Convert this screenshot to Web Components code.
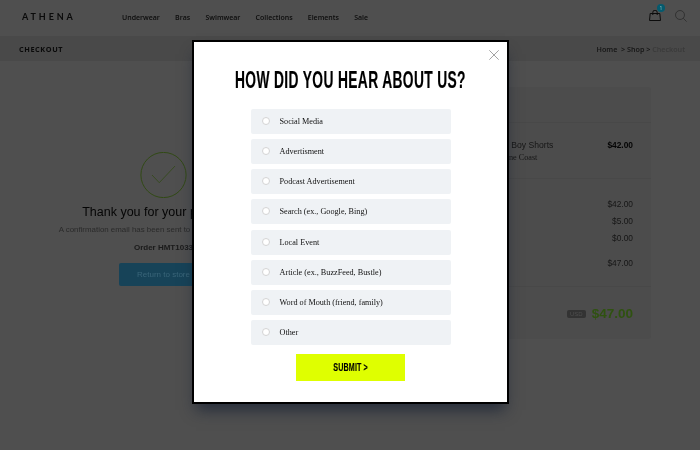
<!DOCTYPE html>
<html>
<head>
<meta charset="utf-8">
<title>Checkout</title>
<style>
    html, body { margin: 0; height: 450px; overflow: hidden; background: #4f4f4f; }
    body { font-family: "Liberation Sans", sans-serif; }
</style>
</head>
<body>
<checkout-page>
    <site-header></site-header>
    <crumb-bar></crumb-bar>
    <div slot="left"><order-confirm></order-confirm></div>
    <div slot="right"><order-summary></order-summary></div>
</checkout-page>
<survey-modal>
    <survey-option>Social Media</survey-option>
    <survey-option>Advertisment</survey-option>
    <survey-option>Podcast Advertisement</survey-option>
    <survey-option>Search (ex., Google, Bing)</survey-option>
    <survey-option>Local Event</survey-option>
    <survey-option>Article (ex., BuzzFeed, Bustle)</survey-option>
    <survey-option>Word of Mouth (friend, family)</survey-option>
    <survey-option>Other</survey-option>
</survey-modal>
<script>
class checkoutPage extends HTMLElement {
    constructor() {
        super();
        this.attachShadow({ mode : 'open' });
        this.shadowRoot.innerHTML = `
            <style>
                :host { display: block; height: 450px; filter: blur(.5px); }
                .content {
                    display: grid;
                    grid-template-columns: 327px 1fr;
                    padding: 26px 49px 0 0;
                }
            </style>
            <slot></slot>
            <section class="content">
                <slot name="left"></slot>
                <slot name="right"></slot>
            </section>
        `;
    }
}

class siteHeader extends HTMLElement {
    constructor() {
        super();
        this.attachShadow({ mode : 'open' });
        this.shadowRoot.innerHTML = `
            <style>
                :host {
                    display: flex;
                    align-items: center;
                    height: 36px;
                    padding: 0 13px 0 22px;
                    font-family: "Open Sans", sans-serif;
                    color: #0c0c0c;
                }
                .logo {
                    width: 100px;
                    font-size: 9px;
                    letter-spacing: 2.9px;
                    color: #0a0a0a;
                    font-family: "Lato", sans-serif;
                    font-weight: 700;
                    margin-bottom: 3px;
                }
                nav { display: flex; gap: 15.2px; font-size: 7px; font-weight: 600; flex: 1; margin-bottom: 1px; }
                .icons { display: flex; align-items: center; gap: 14px; margin-bottom: 5px; }
                .cart { position: relative; width: 12px; height: 11px; }
                .badge {
                    position: absolute;
                    top: -6px;
                    left: 8px;
                    width: 8px;
                    height: 8px;
                    border-radius: 50%;
                    background: #055a6e;
                    color: #9cc;
                    font-size: 5px;
                    line-height: 8px;
                    text-align: center;
                }
                svg { display: block; }
            </style>
            <div class="logo">ATHENA</div>
            <nav>
                <span>Underwear</span><span>Bras</span><span>Swimwear</span>
                <span>Collections</span><span>Elements</span><span>Sale</span>
            </nav>
            <div class="icons">
                <div class="cart">
                    <svg width="12" height="11" viewBox="0 0 12 11" fill="none" stroke="#0c0c0c" stroke-width="1">
                        <path d="M1.2 3.5h9.6l.7 7H.5z"/>
                        <path d="M3.8 5V2.4a2.2 2.2 0 0 1 4.4 0V5"/>
                    </svg>
                    <span class="badge">1</span>
                </div>
                <svg width="12" height="12" viewBox="0 0 12 12" fill="none" stroke="#2c2c2c" stroke-width=".8">
                    <circle cx="5" cy="5" r="4.5"/><path d="M8.2 8.2 11.6 11.6"/>
                </svg>
            </div>
        `;
    }
}

class crumbBar extends HTMLElement {
    constructor() {
        super();
        this.attachShadow({ mode : 'open' });
        this.shadowRoot.innerHTML = `
            <style>
                :host {
                    display: flex;
                    justify-content: space-between;
                    align-items: center;
                    height: 25px;
                    padding: 0 15px 0 19px;
                    background: #494949;
                    font-family: "Open Sans", sans-serif;
                    color: #0a0a0a;
                }
                h2 { margin: 0; font-size: 7.3px; font-weight: 700; letter-spacing: .6px; }
                .path { font-size: 7.2px; font-weight: 600; color: #141414; }
                .path span { color: #3a3a3a; }
            </style>
            <h2>CHECKOUT</h2>
            <div class="path">Home &nbsp;&gt; Shop &gt; <span>Checkout</span></div>
        `;
    }
}

class orderConfirm extends HTMLElement {
    constructor() {
        super();
        this.attachShadow({ mode : 'open' });
        this.shadowRoot.innerHTML = `
            <style>
                :host {
                    display: flex;
                    flex-direction: column;
                    align-items: center;
                    padding-top: 65px;
                    color: #222;
                }
                svg { display: block; }
                h1 { margin: 5.5px 0 0; font-size: 12.5px; line-height: 17px; font-weight: 400; white-space: nowrap; color: #050505; }
                p { margin: 3px 0 0; font-size: 7.9px; line-height: 11px; color: #2a2a2a; white-space: nowrap; }
                p.order { margin-top: 7px; font-size: 8px; font-weight: 700; color: #1a1a1a; }
                a {
                    display: block;
                    margin-top: 10.5px;
                    width: 89px;
                    height: 23px;
                    background: #174358;
                    border-radius: 2px;
                    color: #3a6579;
                    font-size: 8px;
                    line-height: 23px;
                    text-align: center;
                }
            </style>
            <svg width="47" height="46" viewBox="0 0 47 46" fill="none" stroke="#324a16">
                <circle cx="23.5" cy="23" r="22.6" stroke-width="1"/>
                <path d="M12 23 19.3 30.7 35 14" stroke-width=".8"/>
            </svg>
            <h1>Thank you for your purchase!</h1>
            <p>A confirmation email has been sent to your email inbox now.</p>
            <p class="order">Order HMT1033</p>
            <a>Return to store</a>
        `;
    }
}

class orderSummary extends HTMLElement {
    constructor() {
        super();
        this.attachShadow({ mode : 'open' });
        this.shadowRoot.innerHTML = `
            <style>
                :host {
                    display: block;
                    height: 252px;
                    background: #4c4c4c;
                    border-radius: 3px;
                    font-size: 8.4px;
                    color: #161616;
                }
                section { box-sizing: border-box; border-bottom: 1px solid #484848; }
                .head { height: 36px; }
                .item { height: 56px; display: flex; justify-content: flex-end; padding: 17px 18px 0 0; }
                .name { margin-right: 54px; text-align: right; white-space: nowrap; font-size: 8.6px; }
                .name small { display: block; margin-top: 3px; padding-right: 16px; font: 8.2px "Liberation Serif", serif; }
                .price { font-weight: 700; color: #050505; }
                .totals {
                    height: 108px;
                    display: flex;
                    flex-direction: column;
                    align-items: flex-end;
                    gap: 7px;
                    padding: 20px 18px 0 0;
                }
                .totals div { line-height: 10px; }
                .totals .sum { margin-top: 8px; }
                .grand { border: 0; display: flex; justify-content: flex-end; align-items: center; gap: 6px; padding: 19px 18px 0 0; }
                .usd { background: #333; color: #4f4f4f; font-size: 6px; line-height: 8px; padding: 0 3px; border-radius: 2px; }
                .amount { font-size: 13.5px; font-weight: 700; color: #2f5210; }
            </style>
            <section class="head"></section>
            <section class="item">
                <div class="name">Lace Knit Boy Shorts<small>Marine Coast</small></div>
                <div class="price">$42.00</div>
            </section>
            <section class="totals">
                <div>$42.00</div><div>$5.00</div><div>$0.00</div><div class="sum">$47.00</div>
            </section>
            <section class="grand"><span class="usd">USD</span><span class="amount">$47.00</span></section>
        `;
    }
}

class surveyOption extends HTMLElement {
    constructor() {
        super();
        this.attachShadow({ mode : 'open' });
        this.shadowRoot.innerHTML = `
            <style>
                :host {
                    display: flex;
                    align-items: center;
                    gap: 10px;
                    height: 25px;
                    padding-left: 11px;
                    background: #eff2f5;
                    border-radius: 2px;
                    font: 8.2px "Liberation Serif", serif;
                    color: #111;
                }
                i {
                    width: 6px;
                    height: 6px;
                    border: 1px solid #d4d4d4;
                    border-radius: 50%;
                    background: #fff;
                    margin-top: -1px;
                }
                span { filter: blur(.2px); }
            </style>
            <i></i><span><slot></slot></span>
        `;
    }
}

class surveyModal extends HTMLElement {
    constructor() {
        super();
        this.attachShadow({ mode : 'open' });
        this.shadowRoot.innerHTML = `
            <style>
                :host { position: absolute; inset: 0; display: block; }
                .box {
                    position: relative;
                    box-sizing: border-box;
                    width: 317px;
                    height: 364px;
                    margin: 40px 0 0 192px;
                    padding-top: 23px;
                    background: #fff;
                    border: 2px solid #000;
                    box-shadow: 0 10px 14px -4px rgba(20, 30, 50, .7);
                    display: flex;
                    flex-direction: column;
                    align-items: center;
                }
                .close { position: absolute; top: 8px; right: 8.5px; display: block; }
                /* no condensed face is installed, so squeeze the bold sans */
                .squeeze { display: inline-block; transform: scaleX(.6); letter-spacing: .6px; -webkit-text-stroke: .2px #000; }
                h1 {
                    margin: 0;
                    font: 700 23px/30px "Liberation Sans", sans-serif;
                    color: #000;
                    white-space: nowrap;
                }
                .options { display: grid; gap: 5.15px; width: 200px; margin-top: 14px; }
                button {
                    width: 109px;
                    height: 27px;
                    margin-top: 8.95px;
                    border: 0;
                    padding: 0;
                    background: #dfff00;
                    color: #000;
                    font: 700 11px "Liberation Sans", sans-serif;
                }
                button .squeeze { transform: scaleX(.65); letter-spacing: .2px; -webkit-text-stroke: .15px #000; }
            </style>
            <div class="box">
                <svg class="close" width="10" height="10" viewBox="0 0 10 10" stroke="#999" stroke-width=".9">
                    <path d="M.3.3l9.4 9.4M9.7.3l-9.4 9.4"/>
                </svg>
                <h1><span class="squeeze">HOW DID YOU HEAR ABOUT US?</span></h1>
                <div class="options"><slot></slot></div>
                <button><span class="squeeze">SUBMIT &gt;</span></button>
            </div>
        `;
    }
}

customElements.define('checkout-page', checkoutPage);
customElements.define('site-header', siteHeader);
customElements.define('crumb-bar', crumbBar);
customElements.define('order-confirm', orderConfirm);
customElements.define('order-summary', orderSummary);
customElements.define('survey-option', surveyOption);
customElements.define('survey-modal', surveyModal);
</script>
</body>
</html>
